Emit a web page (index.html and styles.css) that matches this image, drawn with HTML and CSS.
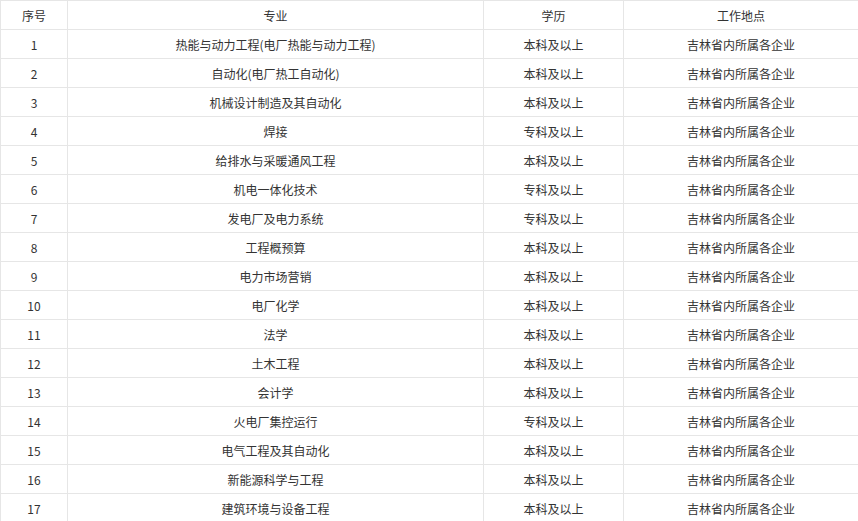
FILE: index.html
```
<!DOCTYPE html>
<html lang="zh-CN">
<head>
<meta charset="utf-8">
<link rel="stylesheet" href="styles.css">
</head>
<body>
<table class="jobs">
  <colgroup>
    <col class="c1"><col class="c2"><col class="c3"><col class="c4">
  </colgroup>
  <thead>
    <tr><th>序号</th><th>专业</th><th>学历</th><th>工作地点</th></tr>
  </thead>
  <tbody>
    <tr><td>1</td><td>热能与动力工程(电厂热能与动力工程)</td><td>本科及以上</td><td>吉林省内所属各企业</td></tr>
    <tr><td>2</td><td>自动化(电厂热工自动化)</td><td>本科及以上</td><td>吉林省内所属各企业</td></tr>
    <tr><td>3</td><td>机械设计制造及其自动化</td><td>本科及以上</td><td>吉林省内所属各企业</td></tr>
    <tr><td>4</td><td>焊接</td><td>专科及以上</td><td>吉林省内所属各企业</td></tr>
    <tr><td>5</td><td>给排水与采暖通风工程</td><td>本科及以上</td><td>吉林省内所属各企业</td></tr>
    <tr><td>6</td><td>机电一体化技术</td><td>专科及以上</td><td>吉林省内所属各企业</td></tr>
    <tr><td>7</td><td>发电厂及电力系统</td><td>专科及以上</td><td>吉林省内所属各企业</td></tr>
    <tr><td>8</td><td>工程概预算</td><td>本科及以上</td><td>吉林省内所属各企业</td></tr>
    <tr><td>9</td><td>电力市场营销</td><td>本科及以上</td><td>吉林省内所属各企业</td></tr>
    <tr><td>10</td><td>电厂化学</td><td>本科及以上</td><td>吉林省内所属各企业</td></tr>
    <tr><td>11</td><td>法学</td><td>本科及以上</td><td>吉林省内所属各企业</td></tr>
    <tr><td>12</td><td>土木工程</td><td>本科及以上</td><td>吉林省内所属各企业</td></tr>
    <tr><td>13</td><td>会计学</td><td>本科及以上</td><td>吉林省内所属各企业</td></tr>
    <tr><td>14</td><td>火电厂集控运行</td><td>专科及以上</td><td>吉林省内所属各企业</td></tr>
    <tr><td>15</td><td>电气工程及其自动化</td><td>本科及以上</td><td>吉林省内所属各企业</td></tr>
    <tr><td>16</td><td>新能源科学与工程</td><td>本科及以上</td><td>吉林省内所属各企业</td></tr>
    <tr><td>17</td><td>建筑环境与设备工程</td><td>本科及以上</td><td>吉林省内所属各企业</td></tr>
  </tbody>
</table>
</body>
</html>
```
FILE: styles.css
```
html, body {
  margin: 0;
  padding: 0;
  background: #ffffff;
}
body {
  font-family: "Noto Sans CJK SC", "Noto Sans", sans-serif;
  font-size: 12px;
  color: #333333;
  overflow: hidden;
}
.jobs {
  border-collapse: collapse;
  table-layout: fixed;
  width: 858px;
}
.c1 { width: 67px; }
.c2 { width: 416px; }
.c3 { width: 140px; }
.c4 { width: 235px; }
.jobs th,
.jobs td {
  border: 1px solid #e6e6e6;
  height: 27px;
  padding: 1px 0 0;
  text-align: center;
  vertical-align: middle;
  font-weight: normal;
  line-height: 16px;
  white-space: nowrap;
}
```
